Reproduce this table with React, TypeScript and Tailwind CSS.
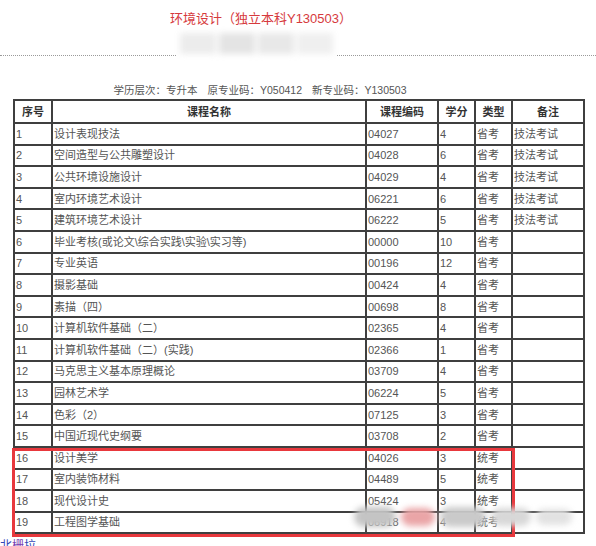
const COURSES: [string, string, string, string, string, string][] = [
  ["1", "设计表现技法", "04027", "4", "省考", "技法考试"],
  ["2", "空间造型与公共雕塑设计", "04028", "6", "省考", "技法考试"],
  ["3", "公共环境设施设计", "04029", "4", "省考", "技法考试"],
  ["4", "室内环境艺术设计", "06221", "6", "省考", "技法考试"],
  ["5", "建筑环境艺术设计", "06222", "5", "省考", "技法考试"],
  ["6", "毕业考核(或论文\\综合实践\\实验\\实习等)", "00000", "10", "省考", ""],
  ["7", "专业英语", "00196", "12", "省考", ""],
  ["8", "摄影基础", "00424", "4", "省考", ""],
  ["9", "素描（四）", "00698", "8", "省考", ""],
  ["10", "计算机软件基础（二）", "02365", "4", "省考", ""],
  ["11", "计算机软件基础（二）(实践)", "02366", "1", "省考", ""],
  ["12", "马克思主义基本原理概论", "03709", "4", "省考", ""],
  ["13", "园林艺术学", "06224", "5", "省考", ""],
  ["14", "色彩（2）", "07125", "3", "省考", ""],
  ["15", "中国近现代史纲要", "03708", "2", "省考", ""],
  ["16", "设计美学", "04026", "3", "统考", ""],
  ["17", "室内装饰材料", "04489", "5", "统考", ""],
  ["18", "现代设计史", "05424", "3", "统考", ""],
  ["19", "工程图学基础", "06918", "4", "统考", ""],
];

const HEADERS = ["序号", "课程名称", "课程编码", "学分", "类型", "备注"];
const COL_WIDTHS = ["w-[38px]", "w-[314px]", "w-[72px]", "w-[37px]", "w-[37px]", "w-[72px]"];

export default function App() {
  return (
    <div className="relative w-[596px] h-[546px] overflow-hidden bg-white font-['Liberation_Sans','Noto_Sans_CJK_SC',sans-serif]">
      {/* title block */}
      <div className="pr-[74px] pt-[11px] text-center text-[13px] leading-[16px] text-[#d63a3d]">
        环境设计（独立本科Y130503）
      </div>
      <div className="mt-[28px] border-t border-dotted border-[#9a9a9a]" />
      <div className="mt-[27px] pr-[76px] text-center text-[10.5px] leading-[14px] text-[#555]">
        学历层次：专升本
        <span className="ml-[10px]">原专业码：Y050412</span>
        <span className="ml-[10px]">新专业码：Y130503</span>
      </div>

      {/* blurred stamp under title */}
      <div className="absolute left-[176px] top-[29px] w-[161px] h-[29px] bg-white">
        <div className="flex h-full gap-[3px] blur-[3px] p-[4px]">
          <div className="flex-1 bg-[#ececec]" />
          <div className="flex-1 bg-[#e4e4e4]" />
          <div className="flex-1 bg-[#e8e8e8]" />
          <div className="flex-1 bg-[#efefef]" />
        </div>
      </div>

      <table className="ml-[13px] mt-[2px] w-[570px] table-fixed border-collapse text-[11px] leading-[14px] text-[#555]">
        <colgroup>
          {COL_WIDTHS.map((w, i) => (
            <col key={i} className={w} />
          ))}
        </colgroup>
        <thead>
          <tr className="h-[23px]">
            {HEADERS.map((h) => (
              <th key={h} className="border-2 border-[#3f3f3f] text-center font-bold text-[#333]">
                {h}
              </th>
            ))}
          </tr>
        </thead>
        <tbody>
          {COURSES.map((row) => (
            <tr key={row[0]} className="h-[21.6px]">
              {row.map((cell, i) => (
                <td key={i} className="border-2 border-[#3f3f3f] px-0 pl-px whitespace-nowrap">
                  {cell}
                </td>
              ))}
            </tr>
          ))}
        </tbody>
      </table>

      {/* highlight box over the last four rows */}
      <div className="absolute left-[12px] top-[448px] w-[503px] h-[89px] border-[3px] border-[#e8383d]" />

      {/* blurred watermark */}
      <div className="absolute left-[354px] top-[503px] w-[224px] h-[28px] blur-[3px]">
        <div className="flex h-full items-center gap-[5px]">
          <div className="h-[20px] w-[42px] rounded-full bg-[#c4c4c4]" />
          <div className="h-[18px] w-[34px] rounded-full bg-[#eaa5a7]" />
          <div className="h-[20px] w-[46px] rounded-full bg-[#cacaca]" />
          <div className="h-[18px] w-[40px] rounded-full bg-[#d8d8d8]" />
          <div className="h-[16px] w-[36px] rounded-full bg-[#e2e2e2]" />
        </div>
      </div>

      <div className="absolute left-0 top-[539px] text-[12px] leading-[14px] text-[#3348b8]">
        北<span className="text-[#7a3fb0]">栅</span>拉
      </div>
    </div>
  );
}
